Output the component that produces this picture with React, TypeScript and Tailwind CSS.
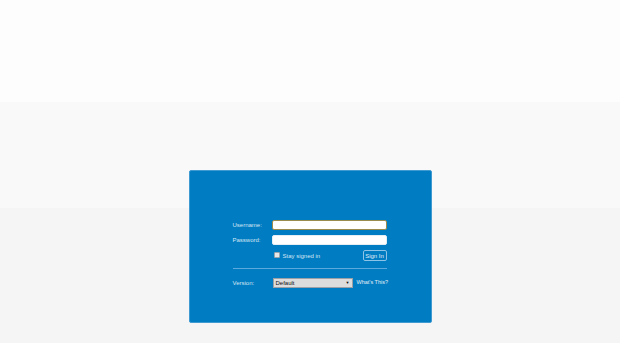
export default function App() {
  return (
    <div className="min-h-[343px] w-full overflow-hidden bg-[linear-gradient(to_bottom,#fdfdfd_0px,#fdfdfd_102px,#f9f9f9_102px,#f9f9f9_208px,#f5f5f5_208px)] pt-[170px] font-['Liberation_Sans',Arial,sans-serif]">
      <div className="mx-auto h-[153px] w-[243px] rounded-[2px] border border-[#3f9ad2] bg-[#007cc2]">
        <form className="ml-[43px] w-[156px] pt-[49px] text-[6px] leading-none text-[#d4e6f3]">
          <div className="flex h-[10px] items-center">
            <label className="w-[39px]">Username:</label>
            <input
              type="text"
              className="h-[10px] w-[115px] rounded-[2px] border border-[#9b8b4e] bg-white outline-none"
            />
          </div>
          <div className="mt-[5px] flex h-[10px] items-center">
            <label className="w-[39px]">Password:</label>
            <input
              type="password"
              className="h-[10px] w-[115px] rounded-[2px] border border-[#e6eef5] bg-white outline-none"
            />
          </div>
          <div className="mt-[5px] flex h-[11px] items-start">
            <div className="ml-[41px] mt-[1px] flex items-center">
              <span className="block h-[6px] w-[6px] rounded-[1px] border border-[#9aa4ad] bg-[#e8e8e8]" />
              <span className="ml-[3px] mt-[2px]">Stay signed in</span>
            </div>
            <button
              type="button"
              className="ml-auto mr-[2px] h-[11px] w-[24px] rounded-[2px] border border-[#8cc3e6] text-[6px] leading-none text-[#e1eef8]"
            >
              Sign In
            </button>
          </div>
          <div className="mt-[7px] h-px w-[154px] bg-[#5aaade]" />
          <div className="mt-[9px] flex h-[10px] items-center">
            <label className="w-[40px]">Version:</label>
            <div className="flex h-[10px] w-[80px] items-center justify-between border border-[#9aa0a6] bg-[#dcdcdc] px-[2px] text-[#111]">
              <span>Default</span>
              <span className="text-[4px]">▼</span>
            </div>
            <a className="ml-[4px] whitespace-nowrap text-[5.5px] text-[#e1eef8]">What's This?</a>
          </div>
        </form>
      </div>
    </div>
  );
}
